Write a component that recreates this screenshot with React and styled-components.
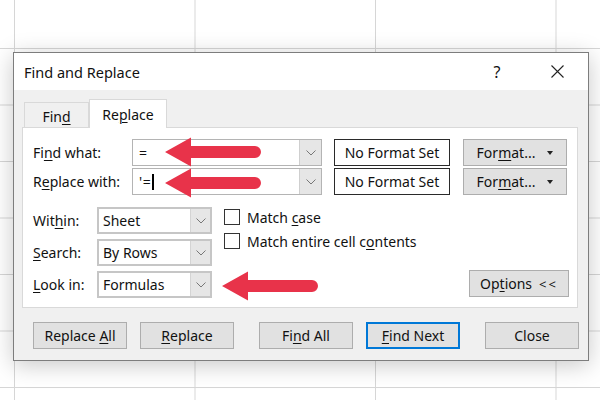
import React from "react";
import styled, { createGlobalStyle } from "styled-components";

const Global = createGlobalStyle`
  html, body { margin: 0; padding: 0; background: #fff; }
  body { font-family: "Noto Sans", "Open Sans", sans-serif; }
  * { box-sizing: border-box; }
`;

const Page = styled.div`
  position: relative;
  width: 600px;
  height: 400px;
  overflow: hidden;
  background-color: #fff;
  background-image:
    linear-gradient(to right, #d6d6d6 1px, transparent 1px),
    linear-gradient(to bottom, #d6d6d6 1px, transparent 1px);
  background-size: 180.5px 100%, 100% 56.5px;
  background-position: 14px 0, 0 48px;
`;

const Dialog = styled.div`
  position: absolute;
  left: 13px;
  top: 52px;
  width: 576px;
  height: 309px;
  border: 1px solid #7d7d7d;
  background: #f0f0f0;
  display: flex;
  flex-direction: column;
  box-shadow: 0 4px 22px rgba(0, 0, 0, 0.22);
  color: #111;
  font-size: 14px;
`;

const TitleBar = styled.div`
  height: 37px;
  background: #fff;
  display: flex;
  align-items: center;
  padding-left: 10px;
`;

const Title = styled.div`
  font-size: 14.5px;
  flex: 1;
`;

const HelpGlyph = styled.div`
  font-size: 16px;
  width: 14px;
  text-align: center;
  margin-right: 47px;
`;

const CloseIcon = styled.svg`
  margin-right: 24px;
`;

const Body = styled.div`
  flex: 1;
  padding-top: 9px;
  display: flex;
  flex-direction: column;
`;

const TabRow = styled.div`
  display: flex;
  align-items: flex-end;
  margin-left: 10px;
  position: relative;
  z-index: 1;
`;

const Tab = styled.div`
  height: ${(p) => (p.$active ? "29px" : "25px")};
  width: ${(p) => p.$w}px;
  margin-bottom: ${(p) => (p.$active ? "-1px" : "0")};
  background: ${(p) => (p.$active ? "#fff" : "#f0f0f0")};
  border: 1px solid #d9d9d9;
  border-bottom: none;
  display: flex;
  align-items: center;
  justify-content: center;
  padding-top: ${(p) => (p.$active ? "0" : "2px")};
`;

const Panel = styled.div`
  margin: 0 10px 0 8px;
  height: 181px;
  background: #fff;
  border: 1px solid #d9d9d9;
  padding: 11px 8px 9px 10px;
  display: flex;
  flex-direction: column;
`;

const FieldRow = styled.div`
  display: grid;
  grid-template-columns: 87px 190px 116px 105px;
  column-gap: 12px;
  height: 25px;
  align-items: stretch;
  margin-top: ${(p) => p.$mt || 0}px;
  & > :nth-child(4) { margin-left: 1px; }
`;

const Label = styled.div`
  display: flex;
  align-items: center;
  white-space: nowrap;
`;

const ComboBox = styled.div`
  display: flex;
  border: 1px solid #b4b4b4;
  background: #fff;
`;

const ComboText = styled.div`
  flex: 1;
  display: flex;
  align-items: center;
  padding-left: 6px;
  letter-spacing: 0.5px;
`;

const Caret = styled.span`
  display: inline-block;
  width: 1.5px;
  height: 16px;
  background: #000;
  margin-left: 1px;
`;

const DropButton = styled.div`
  width: ${(p) => p.$w || 22}px;
  background: #e6e6e6;
  border-left: 1px solid ${(p) => p.$border || "#cfcfcf"};
  display: flex;
  align-items: center;
  justify-content: center;
`;

const FormatBox = styled.div`
  border: 1px solid #2a2a2a;
  background: #fff;
  display: flex;
  align-items: center;
  justify-content: center;
`;

const Button = styled.div`
  background: #e1e1e1;
  border: ${(p) => (p.$focused ? "2px solid #0078d7" : "1px solid #adadad")};
  display: flex;
  align-items: center;
  justify-content: center;
  width: ${(p) => (p.$w ? `${p.$w}px` : "auto")};
  height: 27px;
  white-space: nowrap;
`;

const Tri = styled.span`
  display: inline-block;
  width: 0;
  height: 0;
  border-left: 3.5px solid transparent;
  border-right: 3.5px solid transparent;
  border-top: 4px solid #222;
  margin-left: 12px;
  margin-top: 1px;
`;

const Chevrons = styled.span`
  margin-left: 7px;
  letter-spacing: 2px;
  font-size: 13px;
`;

const OptionsArea = styled.div`
  display: flex;
  margin-top: 14px;
`;

const SelectCol = styled.div`
  display: flex;
  flex-direction: column;
  gap: 5px;
`;

const SelectRow = styled.div`
  display: grid;
  grid-template-columns: 64px 115px;
  height: 27px;
`;

const Select = styled.div`
  display: flex;
  border: 2px solid #c6c6c6;
  background: #fff;
`;

const SelectText = styled.div`
  flex: 1;
  display: flex;
  align-items: center;
  padding-left: 4px;
`;

const CheckCol = styled.div`
  flex: 1;
  margin-left: 12px;
  padding-top: 2px;
  display: flex;
  flex-direction: column;
  gap: 8px;
`;

const CheckRow = styled.div`
  display: flex;
  align-items: center;
  gap: 7px;
  height: 16px;
  white-space: nowrap;
`;

const Box = styled.div`
  width: 16px;
  height: 16px;
  flex: none;
  border: 1px solid #333;
  background: #fff;
`;

const OptionsButton = styled(Button)`
  align-self: flex-end;
  margin-bottom: 1px;
`;

const ButtonRow = styled.div`
  display: flex;
  margin: 14px 0 0 19px;
  & > :nth-child(2) { margin-left: 13px; }
  & > :nth-child(3) { margin-left: 25px; }
  & > :nth-child(4) { margin-left: 13px; }
  & > :nth-child(5) { margin-left: 25px; }
`;

const U = styled.span`
  text-decoration: underline;
  text-underline-offset: 2px;
  text-decoration-thickness: 1px;
`;

const ArrowSvg = styled.svg`
  position: absolute;
  left: ${(p) => p.$x}px;
  top: ${(p) => p.$y}px;
`;

const Chevron = () => (
  <svg width="10" height="6" viewBox="0 0 10 6">
    <polyline points="0.5,0.5 5,5 9.5,0.5" fill="none" stroke="#777" strokeWidth="1" />
  </svg>
);

const Arrow = ({ x, y }) => (
  <ArrowSvg $x={x} $y={y} width="97" height="30" viewBox="0 0 97 30">
    <path
      d="M0,15 L26,0.5 L26,9 L90,9 A6,6 0 0 1 90,21 L26,21 L26,29.5 Z"
      fill="#e8334a"
    />
  </ArrowSvg>
);

export default function App() {
  return (
    <Page>
      <Global />
      <Dialog>
        <TitleBar>
          <Title>Find and Replace</Title>
          <HelpGlyph>?</HelpGlyph>
          <CloseIcon width="13" height="13" viewBox="0 0 13 13">
            <path d="M0.5,0.5 L12.5,12.5 M12.5,0.5 L0.5,12.5" stroke="#222" strokeWidth="1.1" />
          </CloseIcon>
        </TitleBar>
        <Body>
          <TabRow>
            <Tab $w={65}>
              Fin<U>d</U>
            </Tab>
            <Tab $w={78} $active>
              Re<U>p</U>lace
            </Tab>
          </TabRow>
          <Panel>
            <FieldRow>
              <Label>
                Fi<U>n</U>d what:
              </Label>
              <ComboBox>
                <ComboText>=</ComboText>
                <DropButton>
                  <Chevron />
                </DropButton>
              </ComboBox>
              <FormatBox>No Format Set</FormatBox>
              <Button>
                For<U>m</U>at...
                <Tri />
              </Button>
            </FieldRow>
            <FieldRow $mt={4}>
              <Label>
                R<U>e</U>place with:
              </Label>
              <ComboBox>
                <ComboText>
                  '=<Caret />
                </ComboText>
                <DropButton>
                  <Chevron />
                </DropButton>
              </ComboBox>
              <FormatBox>No Format Set</FormatBox>
              <Button>
                For<U>m</U>at...
                <Tri />
              </Button>
            </FieldRow>
            <OptionsArea>
              <SelectCol>
                <SelectRow>
                  <Label>
                    Wit<U>h</U>in:
                  </Label>
                  <Select>
                    <SelectText>Sheet</SelectText>
                    <DropButton $w={20} $border="#d4d4d4">
                      <Chevron />
                    </DropButton>
                  </Select>
                </SelectRow>
                <SelectRow>
                  <Label>
                    <U>S</U>earch:
                  </Label>
                  <Select>
                    <SelectText>By Rows</SelectText>
                    <DropButton $w={20} $border="#d4d4d4">
                      <Chevron />
                    </DropButton>
                  </Select>
                </SelectRow>
                <SelectRow>
                  <Label>
                    <U>L</U>ook in:
                  </Label>
                  <Select>
                    <SelectText>Formulas</SelectText>
                    <DropButton $w={20} $border="#d4d4d4">
                      <Chevron />
                    </DropButton>
                  </Select>
                </SelectRow>
              </SelectCol>
              <CheckCol>
                <CheckRow>
                  <Box />
                  <span>
                    Match <U>c</U>ase
                  </span>
                </CheckRow>
                <CheckRow>
                  <Box />
                  <span>
                    Match entire cell c<U>o</U>ntents
                  </span>
                </CheckRow>
              </CheckCol>
              <OptionsButton $w={100}>
                Op<U>t</U>ions<Chevrons>&lt;&lt;</Chevrons>
              </OptionsButton>
            </OptionsArea>
          </Panel>
          <ButtonRow>
            <Button $w={94}>
              Replace&nbsp;<U>A</U>ll
            </Button>
            <Button $w={94}>
              <U>R</U>eplace
            </Button>
            <Button $w={94}>
              Fi<U>n</U>d All
            </Button>
            <Button $w={94} $focused>
              <U>F</U>ind Next
            </Button>
            <Button $w={94}>Close</Button>
          </ButtonRow>
        </Body>
      </Dialog>
      <Arrow x={165} y={137} />
      <Arrow x={165} y={168} />
      <Arrow x={222} y={271} />
    </Page>
  );
}
